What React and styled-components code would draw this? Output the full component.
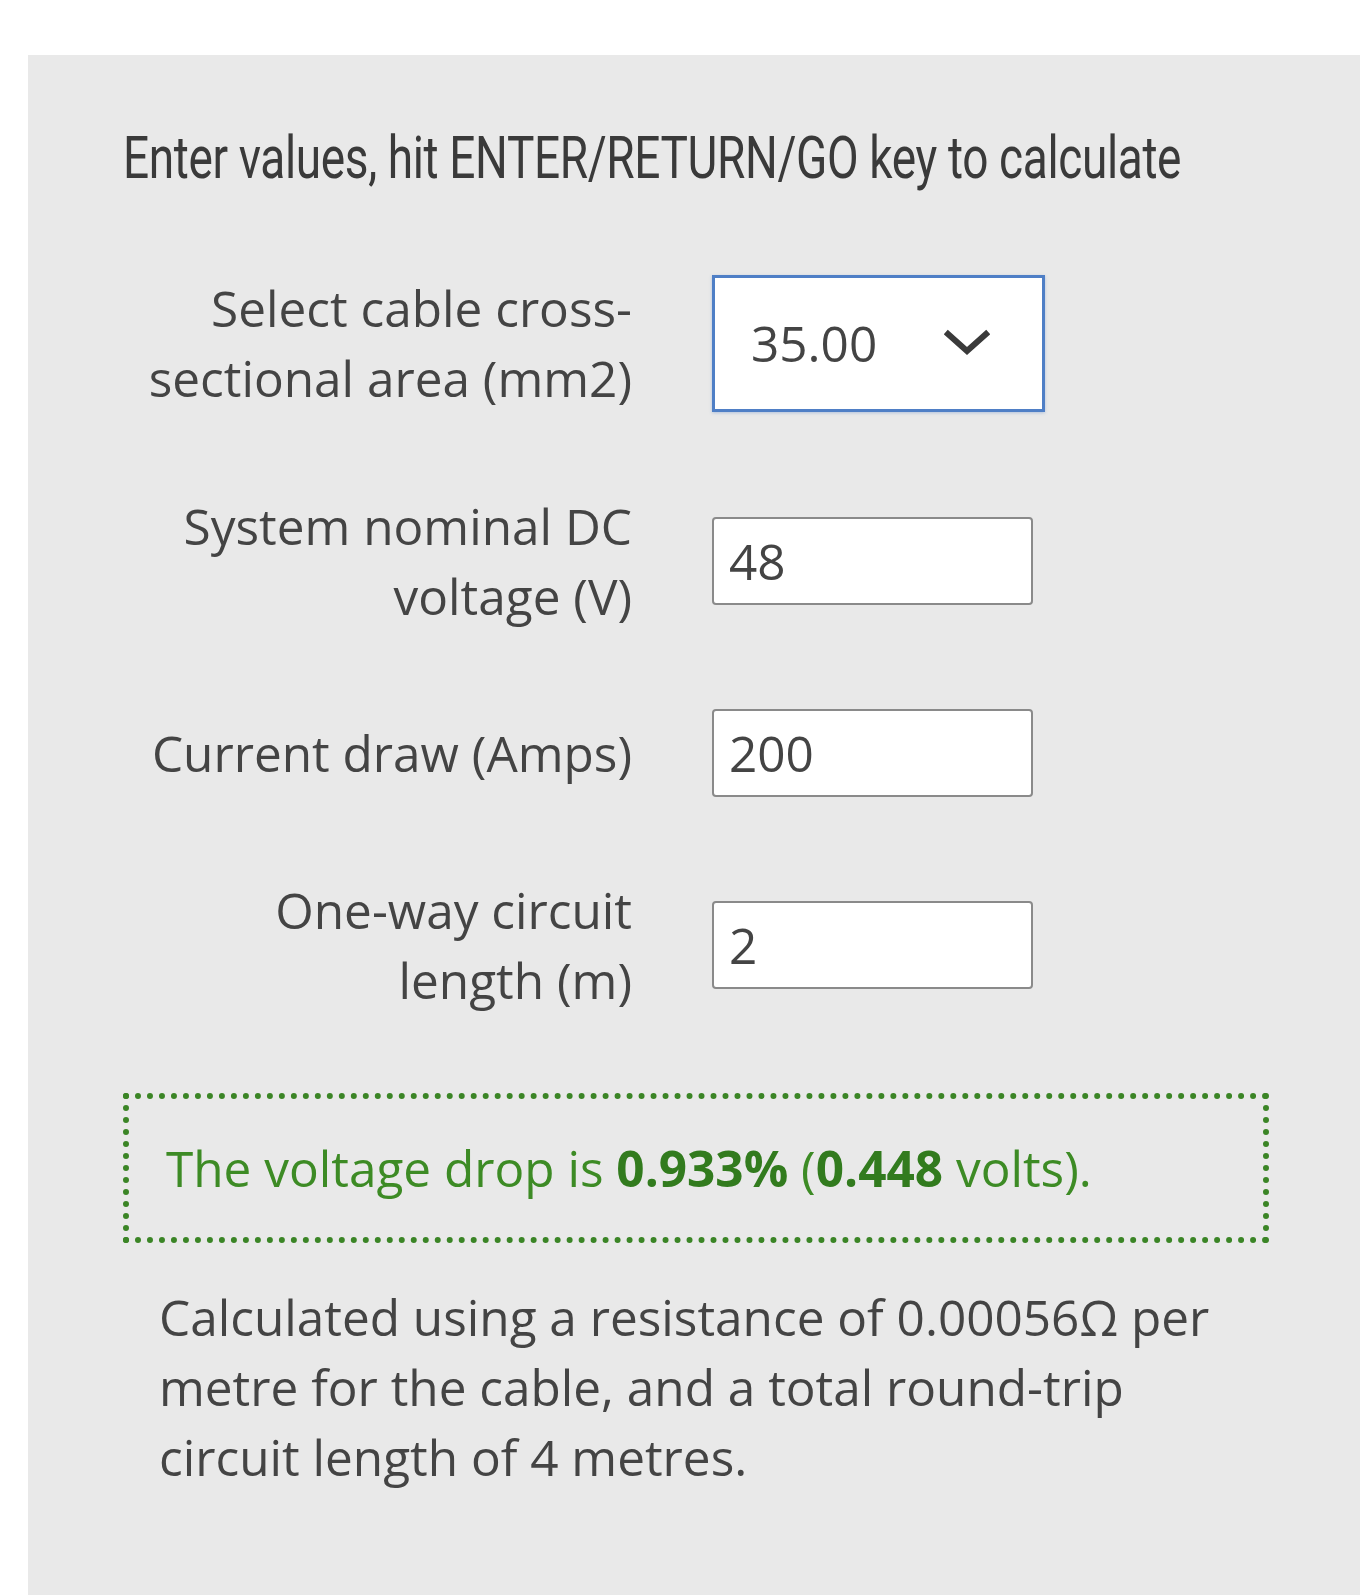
import React from 'react';
import styled, { createGlobalStyle } from 'styled-components';

const GlobalStyle = createGlobalStyle`
  html, body {
    margin: 0;
    padding: 0;
    background: #ffffff;
    overflow: hidden;
  }
  body {
    font-family: "Open Sans", Lato, sans-serif;
    color: #444444;
  }
`;

const Page = styled.div`
  width: 1360px;
  height: 1595px;
  padding: 55px 0 0 28px;
  box-sizing: border-box;
  overflow: hidden;
`;

const Panel = styled.section`
  width: 1420px;
  min-height: 1560px;
  background: #e9e9e9;
  padding: 65px 0 0 95px;
  box-sizing: border-box;
`;

const Column = styled.div`
  width: 1146px;
`;

const Heading = styled.h2`
  margin: 0 0 77px 0;
  font-family: Roboto, "Liberation Sans", sans-serif;
  font-weight: 400;
  font-size: 60px;
  line-height: 76px;
  color: #3a3a3a;
  white-space: nowrap;

  span {
    display: inline-block;
    transform: scaleX(0.767);
    transform-origin: left center;
    letter-spacing: -0.5px;
  }
`;

const Form = styled.form`
  display: flex;
  flex-direction: column;
  gap: 78px;
`;

const Row = styled.div`
  display: flex;
  align-items: center;
  gap: 80px;
  padding-left: 4px;
`;

const Label = styled.label`
  width: 505px;
  text-align: right;
  font-size: 49.5px;
  line-height: 70px;
  color: #444444;
`;

const Field = styled.input`
  width: 321px;
  height: 88px;
  box-sizing: border-box;
  border: 2px solid #8a8a8a;
  border-radius: 4px;
  background: #ffffff;
  padding: 0 15px;
  font-family: inherit;
  font-size: 49.5px;
  color: #444444;
  outline: none;
`;

const SelectBox = styled.div`
  width: 333px;
  height: 137px;
  box-sizing: border-box;
  border: 3px solid #4f7fc6;
  background: #ffffff;
  box-shadow: 0 1px 3px rgba(79, 127, 198, 0.35);
  display: flex;
  align-items: center;
  justify-content: space-between;
  padding: 0 52px 0 36px;
  font-size: 49.5px;
  color: #444444;
`;

const Chevron = () => (
  <svg width="46" height="28" viewBox="0 0 46 28">
    <path d="M4 5 L23 22 L42 5" fill="none" stroke="#3a3a3a" strokeWidth="6" strokeLinecap="square" />
  </svg>
);

const Result = styled.div`
  margin-top: 78px;
  border: 6px dotted #3b8526;
  padding: 34px 37px;
  font-size: 49.5px;
  line-height: 70px;
  color: #3d8b25;

  b {
    color: #327b1e;
    font-weight: 700;
  }
`;

const Note = styled.p`
  margin: 39px 0 0 0;
  padding: 0 36px;
  font-size: 49.5px;
  line-height: 70px;
  color: #444444;
`;

const rows = [
  { label: 'System nominal DC voltage (V)', value: '48' },
  { label: 'Current draw (Amps)', value: '200' },
  { label: 'One-way circuit length (m)', value: '2' },
];

export default function App() {
  return (
    <Page>
      <GlobalStyle />
      <Panel>
        <Column>
          <Heading><span>Enter values, hit ENTER/RETURN/GO key to calculate</span></Heading>
          <Form onSubmit={e => e.preventDefault()}>
            <Row>
              <Label>Select cable cross-sectional area (mm2)</Label>
              <SelectBox>
                <span>35.00</span>
                <Chevron />
              </SelectBox>
            </Row>
            {rows.map(r => (
              <Row key={r.label}>
                <Label>{r.label}</Label>
                <Field defaultValue={r.value} />
              </Row>
            ))}
          </Form>
          <Result>
            The voltage drop is <b>0.933%</b> (<b>0.448</b> volts).
          </Result>
          <Note>
            Calculated using a resistance of 0.00056Ω per metre for the cable, and a total round-trip circuit length of 4 metres.
          </Note>
        </Column>
      </Panel>
    </Page>
  );
}
